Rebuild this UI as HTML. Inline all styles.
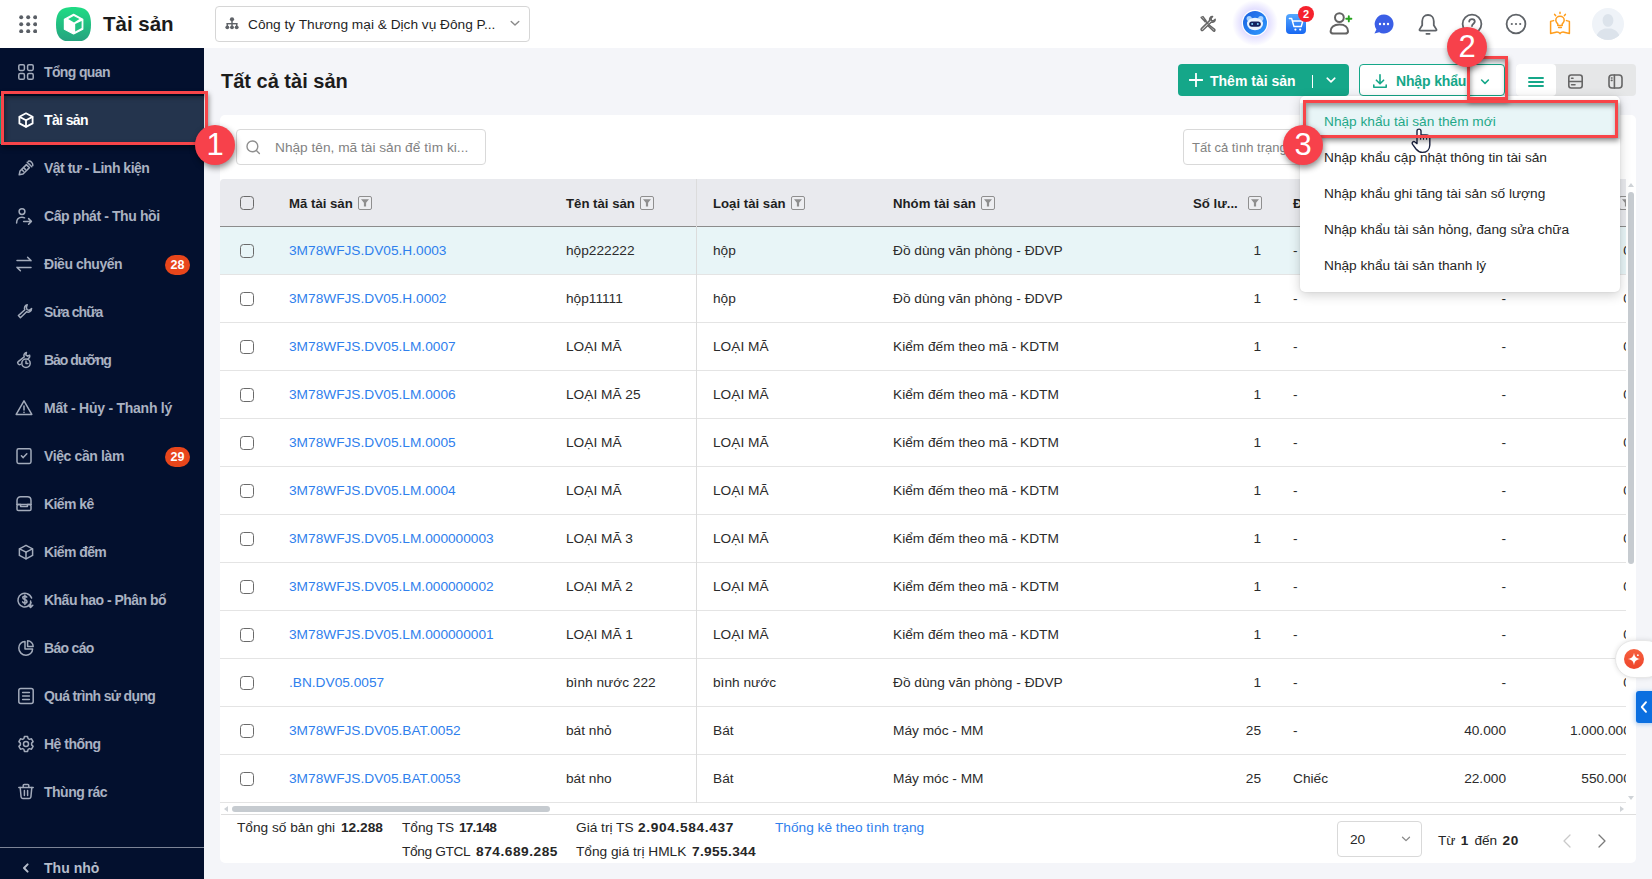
<!DOCTYPE html>
<html lang="vi">
<head>
<meta charset="utf-8">
<title>Tài sản</title>
<style>
*{box-sizing:border-box;margin:0;padding:0}
html,body{width:1652px;height:879px;overflow:hidden;background:#f4f5f9;font-family:"Liberation Sans",sans-serif;color:#212121}
.abs{position:absolute}
#hdr{position:absolute;left:0;top:0;width:1652px;height:48px;background:#fff}
#side{position:absolute;left:0;top:48px;width:204px;height:831px;background:#03102e}
.mi{position:absolute;left:0;width:204px;height:48px;color:#aab2c2;font-weight:bold;font-size:14px;letter-spacing:-0.55px;line-height:48px;padding-left:44px;white-space:nowrap}
.mi svg{position:absolute;left:16px;top:14px;width:20px;height:20px;fill:none;stroke:#a3abbb;stroke-width:1.5;stroke-linecap:round;stroke-linejoin:round}
.mi.act{background:#24344d;color:#fff}
.mi.act svg{stroke:#fff;stroke-width:1.8}
.bdg{position:absolute;left:165px;top:15px;width:25px;height:20px;border-radius:10px;background:#e8461b;color:#fff;font-size:12.5px;font-weight:bold;line-height:20px;text-align:center;letter-spacing:0}
#card{position:absolute;left:220px;top:115px;width:1416px;height:748px;background:#fff;border-radius:5px}
.t{position:absolute;margin-top:1px;white-space:nowrap;font-size:13.7px;line-height:20px;color:#262626}
.lnk{color:#2f80ed !important}
.b{font-weight:bold}
.n{letter-spacing:0.65px}
#tbl{position:absolute;left:220px;top:179px;width:1406px;height:624px;overflow:hidden;background:#fff;border-top-left-radius:4px}
#thead{position:absolute;left:0;top:0;width:1406px;height:48px;background:#e9eaee;border-bottom:1px solid #8c8c8c}
.th{position:absolute;top:14.5px;font-size:13.2px;font-weight:bold;line-height:20px;color:#1f1f1f;white-space:nowrap}
.fi{display:inline-block;width:14px;height:14px;margin-left:5px;vertical-align:-2px}
.tr{position:absolute;left:0;width:1406px;height:48px;border-bottom:1px solid #e4e4e4;background:#fff}
.tr.hl{background:#e8f5f7}
.td{position:absolute;top:14px;font-size:13.7px;line-height:20px;color:#2b2b2b;white-space:nowrap}
.cb{position:absolute;width:13.6px;height:13.6px;border:1.6px solid #6a6a6a;border-radius:3.5px;background:transparent}
#vscroll{position:absolute;left:1626px;top:179px;width:10px;height:624px;background:#fff}
#vscroll .thumb{position:absolute;left:2px;top:13px;width:6px;height:372px;border-radius:3px;background:#c6cbd0}
#vscroll .up{position:absolute;left:2px;top:4px;border:3.5px solid transparent;border-bottom:4px solid #cfd3d7;border-top:0}
#vscroll .dn{position:absolute;left:2px;top:617px;border:3.5px solid transparent;border-top:4px solid #cfd3d7;border-bottom:0}
#hscroll{position:absolute;left:221px;top:803px;width:1406px;height:11px;background:#fff}
#hscroll .thumb{position:absolute;left:11px;top:3px;width:318px;height:6px;border-radius:3px;background:#c6cbd0}
#hscroll .lf{position:absolute;left:3px;top:2.5px;border:3.5px solid transparent;border-right:4px solid #cfd3d7;border-left:0}
#hscroll .rt{position:absolute;right:3px;top:2.5px;border:3.5px solid transparent;border-left:4px solid #cfd3d7;border-right:0}
#dd{position:absolute;left:1300px;top:96px;width:320px;height:196px;background:#fff;border-radius:5px;box-shadow:0 3px 12px rgba(0,0,0,.18),0 0 2px rgba(0,0,0,.1)}
.ddi{position:absolute;left:0;width:320px;height:36px;line-height:38px;padding-left:24px;font-size:13.7px;color:#262626;white-space:nowrap}
.ddi.on{background:#e8f5f7;color:#1ea888}
.redbox{position:absolute;border:3px solid #f84549;box-shadow:1px 3px 5px rgba(0,0,0,.42),inset 1px 3px 5px rgba(0,0,0,.38)}
.num{position:absolute;width:40px;height:40px;border-radius:50%;background:#f7414b;color:#fff;font-size:31px;line-height:40px;text-align:center;box-shadow:1px 3px 6px rgba(0,0,0,.45)}

</style>
</head>
<body>
<div id="hdr">
<svg class="abs" style="left:19px;top:15px" width="18.4" height="18.4" viewBox="0 0 18.4 18.4" fill="#5a5f66"><circle cx="2.2" cy="2.2" r="2" /><circle cx="2.2" cy="9.2" r="2" /><circle cx="2.2" cy="16.2" r="2" /><circle cx="9.2" cy="2.2" r="2" /><circle cx="9.2" cy="9.2" r="2" /><circle cx="9.2" cy="16.2" r="2" /><circle cx="16.2" cy="2.2" r="2" /><circle cx="16.2" cy="9.2" r="2" /><circle cx="16.2" cy="16.2" r="2" /></svg>
<svg class="abs" style="left:56px;top:6.8px" width="35" height="34.4" viewBox="0 0 35 34.4" preserveAspectRatio="none">
<defs><linearGradient id="lg" x1="0" y1="0" x2="0" y2="1"><stop offset="0" stop-color="#1fdc84"/><stop offset="1" stop-color="#25a17f"/></linearGradient></defs>
<path d="M17.5 0 C29 0 35 3.5 35 17.5 C35 31.5 29 35 17.5 35 C6 35 0 31.5 0 17.5 C0 3.5 6 0 17.5 0 Z" fill="url(#lg)"/>
<path d="M17.6 7.4 L26.8 12.2 V22.2 L17.6 27 L8.4 22.2 V12.2 Z" fill="#fff" stroke="#fff" stroke-width="1.2" stroke-linejoin="round"/>
<path d="M12.2 12.1 L17.7 9 L23.5 12.1 L18 15.4 Z" fill="#21cf84"/>
<path d="M19.2 17.1 L25.6 14 V20.9 L19.2 24.5 Z" fill="#22c283"/>
</svg>
<span class="abs" style="left:103px;top:12px;font-size:20.5px;font-weight:bold;line-height:24px;color:#1b1b1b;white-space:nowrap">Tài sản</span>
<div class="abs" style="left:215px;top:6px;width:315px;height:36px;border:1px solid #d6d6d6;border-radius:4px;background:#fff"></div>
<svg class="abs" style="left:225px;top:17px" width="14" height="13" viewBox="0 0 14 13" fill="#5f6368"><circle cx="7" cy="2.3" r="2.1"/><rect x="6.3" y="3" width="1.4" height="6"/><rect x="1.6" y="6" width="10.8" height="1.4"/><rect x="1.6" y="6" width="1.4" height="3.5"/><rect x="11" y="6" width="1.4" height="3.5"/><circle cx="2.3" cy="10.3" r="1.9"/><circle cx="7" cy="10.3" r="1.9"/><circle cx="11.7" cy="10.3" r="1.9"/></svg>
<span class="t" style="left:248px;top:14px;color:#1f1f1f">Công ty Thương mại &amp; Dịch vụ Đông P...</span>
<svg class="abs" style="left:509px;top:17px" width="12" height="12" viewBox="0 0 12 12"><path d="M2.2 4.4 L6 8 L9.8 4.4" fill="none" stroke="#8a8a8a" stroke-width="1.4" stroke-linecap="round" stroke-linejoin="round"/></svg>
<svg class="abs" style="left:1198px;top:14px" width="20" height="20" viewBox="0 0 20 20" fill="none" stroke="#666" stroke-width="1.5" stroke-linecap="round" stroke-linejoin="round">
<path d="M3.2 3.4 L5 2.6 L8 6.6 L7 7.6 Z"/><path d="M7.4 7 L10 9.8"/><path d="M11.2 11 L16.6 15.4 C17.6 16.4 16.2 17.8 15.2 16.8 L10.2 12 Z"/>
<path d="M14.6 2.6 C12.6 2.4 11 4.4 11.8 6.4 L3.4 14.6 C2.4 15.6 3.8 17.2 4.9 16.2 L13.4 8 C15.4 8.8 17.4 7.2 17.2 5.2 L15.4 6.8 L13.4 6.4 L13 4.4 Z"/></svg>
<svg class="abs" style="left:1231px;top:-1px" width="48" height="48" viewBox="0 0 48 48">
<defs><radialGradient id="glow" cx="0.5" cy="0.5" r="0.5"><stop offset="0.5" stop-color="#8a7bff" stop-opacity="0.3"/><stop offset="1" stop-color="#8a7bff" stop-opacity="0"/></radialGradient>
<linearGradient id="botg" x1="0" y1="0" x2="1" y2="1"><stop offset="0" stop-color="#1b5fe0"/><stop offset="1" stop-color="#2f9bff"/></linearGradient></defs>
<circle cx="24" cy="24" r="23" fill="url(#glow)"/><circle cx="24" cy="24" r="13.2" fill="#fff"/><circle cx="24" cy="24" r="12" fill="url(#botg)"/>
<circle cx="18.2" cy="19.6" r="2.6" fill="#a9d4ff"/><circle cx="29.8" cy="19.6" r="2.6" fill="#a9d4ff"/>
<ellipse cx="24" cy="25" rx="8" ry="6.2" fill="#e9f4ff"/><rect x="18.2" y="22.4" width="11.6" height="5.4" rx="2.7" fill="#12205e"/>
<circle cx="21.2" cy="25" r="1" fill="#7fd4ff"/><circle cx="26.8" cy="25" r="1" fill="#7fd4ff"/></svg>
<svg class="abs" style="left:1286px;top:5px" width="30" height="30" viewBox="0 0 30 30">
<defs><linearGradient id="cg" x1="0" y1="0" x2="0" y2="1"><stop offset="0" stop-color="#55a8ff"/><stop offset="1" stop-color="#1767f2"/></linearGradient></defs>
<rect x="0" y="9" width="20" height="20" rx="4" fill="url(#cg)"/>
<path d="M3.4 13.4 H5.6 L8 21.6 H15.2 L16.8 16 H7" fill="none" stroke="#fff" stroke-width="1.5" stroke-linecap="round" stroke-linejoin="round"/><circle cx="9.4" cy="24.6" r="1.1" fill="#fff"/><circle cx="14.2" cy="24.6" r="1.1" fill="#fff"/>
<circle cx="20" cy="9" r="8" fill="#f5222d"/><text x="20" y="13" font-size="11" font-weight="bold" fill="#fff" text-anchor="middle" font-family="Liberation Sans, sans-serif">2</text></svg>
<svg class="abs" style="left:1327px;top:11px" width="28" height="26" viewBox="0 0 28 26" fill="none" stroke="#636363" stroke-width="2" stroke-linecap="round">
<circle cx="12.4" cy="6.6" r="4.4"/><path d="M3.6 20.2 C3.6 16.6 6.6 13.4 12.4 13.4 C18.2 13.4 21 16.6 21 20.2 C21 22 19.6 22.6 18 22.6 H6.6 C5 22.6 3.6 22 3.6 20.2 Z"/>
<path d="M21.8 5.2 V10.4 M19.2 7.8 H24.4" stroke="#27a31f" stroke-width="1.9"/></svg>
<svg class="abs" style="left:1372px;top:13px" width="24" height="24" viewBox="0 0 24 24"><path d="M12 1.5 A9.5 9.5 0 1 1 7.2 19.2 L2.4 20.6 L4.4 16.4 A9.5 9.5 0 0 1 12 1.5 Z" fill="#3b5fe6"/><circle cx="8" cy="11" r="1.2" fill="#fff"/><circle cx="12" cy="11" r="1.2" fill="#fff"/><circle cx="16" cy="11" r="1.2" fill="#fff"/></svg>
<svg class="abs" style="left:1416px;top:12px" width="24" height="24" viewBox="0 0 24 24" fill="none" stroke="#5f6368" stroke-width="1.8" stroke-linecap="round" stroke-linejoin="round"><path d="M12 3 C8.4 3 6.2 5.8 6.2 9.2 V13.2 L3.6 17.4 C3.3 18 3.6 18.6 4.4 18.6 H19.6 C20.4 18.6 20.7 18 20.4 17.4 L17.8 13.2 V9.2 C17.8 5.8 15.6 3 12 3 Z"/><path d="M10.4 21.8 H13.6"/></svg>
<svg class="abs" style="left:1460px;top:12px" width="24" height="24" viewBox="0 0 24 24" fill="none" stroke="#5f6368" stroke-width="1.8" stroke-linecap="round"><circle cx="12" cy="12" r="9.4"/><path d="M9.2 9.6 C9.2 6.2 14.8 6.2 14.8 9.6 C14.8 11.6 12 11.8 12 14"/><path d="M12 17 V17.2"/></svg>
<svg class="abs" style="left:1504px;top:12px" width="24" height="24" viewBox="0 0 24 24" fill="none" stroke="#5f6368" stroke-width="1.8"><circle cx="12" cy="12" r="9.4"/><g fill="#5f6368" stroke="none"><circle cx="7.8" cy="12" r="1.1"/><circle cx="12" cy="12" r="1.1"/><circle cx="16.2" cy="12" r="1.1"/></g></svg>
<svg class="abs" style="left:1548px;top:11px" width="24" height="24" viewBox="0 0 24 24" fill="none" stroke="#ff9d1c" stroke-width="1.5" stroke-linecap="round" stroke-linejoin="round">
<path d="M12 1.2 V2.6 M6.6 3.4 L7.6 4.6 M17.4 3.4 L16.4 4.6"/><path d="M12 5.2 C9.4 5.2 7.8 7.2 7.8 9.2 C7.8 11 9 12 9.8 13 V14.6 H14.2 V13 C15 12 16.2 11 16.2 9.2 C16.2 7.2 14.6 5.2 12 5.2 Z"/><path d="M10.6 16.4 H13.4"/>
<path d="M5.6 9.6 L2.6 10.4 V22.4 L8 21.2 C9.6 20.9 11 21.4 12 22.6 C13 21.4 14.4 20.9 16 21.2 L21.4 22.4 V10.4 L18.4 9.6"/></svg>
<svg class="abs" style="left:1592px;top:8px" width="32" height="32" viewBox="0 0 32 32"><defs><clipPath id="avc"><circle cx="16" cy="16" r="16"/></clipPath></defs><circle cx="16" cy="16" r="16" fill="#eff3f8"/><g clip-path="url(#avc)" fill="#dce3eb"><ellipse cx="16" cy="12.4" rx="5.4" ry="6.4"/><path d="M4 32 C4 24 9 22 13 20.6 H19 C23 22 28 24 28 32 Z"/></g></svg>
</div>
<div id="side">
<div class="mi" style="top:0px;letter-spacing:-0.63px"><svg viewBox="0 0 20 20" style="left:16px"><rect x="2.8" y="2.8" width="5.6" height="5.6" rx="1.3"/><rect x="11.6" y="2.8" width="5.6" height="5.6" rx="1.3"/><rect x="2.8" y="11.6" width="5.6" height="5.6" rx="1.3"/><rect x="11.6" y="11.6" width="5.6" height="5.6" rx="1.3"/></svg>Tổng quan</div>
<div class="mi act" style="top:48px;letter-spacing:-0.62px"><svg viewBox="0 0 20 20" style="left:16px"><path d="M10 3.3 L16.6 6.8 V13.4 L10 16.9 L3.4 13.4 V6.8 Z"/><path d="M3.6 6.9 L10 10.2 L16.4 6.9"/><path d="M10 10.2 V16.7"/></svg>Tài sản</div>
<div class="mi" style="top:96px;letter-spacing:-0.50px"><svg viewBox="0 0 20 20" style="left:15.5px"><path d="M11.2 4.2 L15.8 8.8"/><path d="M12.4 3.2 C14.6 2.6 17.2 5.2 16.8 7.6"/><path d="M10.4 6.6 L13.4 9.6 L7 16 L3.2 16.8 L4 13 Z"/><path d="M7.6 9.6 L9.4 11.4 M5.8 11.6 L7.4 13.2"/></svg>Vật tư - Linh kiện</div>
<div class="mi" style="top:144px;letter-spacing:-0.40px"><svg viewBox="0 0 20 20" style="left:14.4px"><circle cx="8" cy="5.6" r="2.9"/><path d="M2.6 17 C2.6 12.8 5 11.2 8 11.2 C9 11.2 9.8 11.4 10.6 11.8"/><path d="M9.6 15.4 H17.2 M14.6 12.6 L17.4 15.4 L14.6 18.2"/></svg>Cấp phát - Thu hồi</div>
<div class="mi" style="top:192px;letter-spacing:-0.46px"><svg viewBox="0 0 20 20" style="left:14px"><path d="M3 6.6 H17 M13.6 3.2 L17 6.6"/><path d="M17 13.4 H3 M6.4 16.8 L3 13.4"/></svg>Điều chuyển<span class="bdg">28</span></div>
<div class="mi" style="top:240px;letter-spacing:-0.88px"><svg viewBox="0 0 20 20" style="left:14.6px"><path d="M12.2 2.8 C10 3.2 8.8 5.6 9.8 7.8 L3.4 13.6 L5.4 15.8 L11.6 9.8 C13.8 10.8 16.6 9.4 16.6 6.6 L14.2 8.4 L12 7.6 L11.4 5.4 Z"/></svg>Sửa chữa</div>
<div class="mi" style="top:288px;letter-spacing:-1.05px"><svg viewBox="0 0 20 20" style="left:14.6px"><path d="M11.4 2.6 C9.4 3 8.4 5 9.2 6.8 L3.2 11.6 C1.8 13 3.6 15.4 5.4 14.4"/><path d="M11.4 2.6 L10.8 4.8 L12.6 6.2 L14.6 5.2 C15 6.8 14.4 8 13.2 8.6"/><circle cx="11" cy="13.2" r="4.2"/><path d="M11 11 V13.4 H12.8"/></svg>Bảo dưỡng</div>
<div class="mi" style="top:336px;letter-spacing:-0.25px"><svg viewBox="0 0 20 20" style="left:14px"><path d="M10 2.8 L17.8 16.4 H2.2 Z"/><path d="M10 8 V12"/><path d="M10 14.2 V14.4"/></svg>Mất - Hủy - Thanh lý</div>
<div class="mi" style="top:384px;letter-spacing:-0.38px"><svg viewBox="0 0 20 20" style="left:14.4px"><rect x="3" y="2.8" width="14" height="14.6" rx="1.6"/><path d="M7.4 9.8 L9.2 11.6 L12.8 7.8"/></svg>Việc cần làm<span class="bdg">29</span></div>
<div class="mi" style="top:432px;letter-spacing:-0.57px"><svg viewBox="0 0 20 20" style="left:14.4px"><path d="M3 10.6 V6.4 C3 4 4.6 2.8 6.6 2.8 H13.4 C15.4 2.8 17 4 17 6.4 V10.6"/><rect x="3" y="10.6" width="14" height="6" rx="1.4"/><path d="M3 10.6 H6.6 V12.6 H13.4 V10.6 H17"/></svg>Kiểm kê</div>
<div class="mi" style="top:480px;letter-spacing:-0.59px"><svg viewBox="0 0 20 20" style="left:16.4px"><path d="M10 3.3 L16.6 6.8 V13.4 L10 16.9 L3.4 13.4 V6.8 Z"/><path d="M3.6 6.9 L10 10.2 L16.4 6.9"/><path d="M10 10.2 V16.7"/></svg>Kiểm đếm</div>
<div class="mi" style="top:528px;letter-spacing:-0.52px"><svg viewBox="0 0 20 20" style="left:15.1px"><path d="M16 12.6 C14.8 16 11.2 17.6 8 16.8 C4.4 15.8 2.2 12 3.2 8.4 C4.2 4.6 8 2.4 11.6 3.4 C14 4 15.8 5.8 16.6 8"/><path d="M11.8 7.2 C11.4 6.4 10.6 6.2 9.8 6.2 C8.6 6.2 7.8 6.8 7.8 7.8 C7.8 10 12 9 12 11.4 C12 12.4 11.2 13 10 13 C9 13 8 12.6 7.6 11.8 M9.9 5 V14.4"/><path d="M15.6 11 V17.2 M13.4 15.2 L15.6 17.4 L17.8 15.2"/></svg>Khấu hao - Phân bổ</div>
<div class="mi" style="top:576px;letter-spacing:-0.68px"><svg viewBox="0 0 20 20" style="left:15.7px"><path d="M9 3.4 C5.2 3.4 2.8 6.6 2.8 10 C2.8 14 6 17.2 10 17.2 C13.4 17.2 16.6 14.8 16.6 11 H9 Z"/><path d="M11.6 2.8 V8.4 H17.2 C17.2 5.4 14.6 2.8 11.6 2.8 Z"/></svg>Báo cáo</div>
<div class="mi" style="top:624px;letter-spacing:-0.64px"><svg viewBox="0 0 20 20" style="left:16px"><rect x="2.8" y="2.6" width="14.4" height="14.8" rx="2"/><path d="M6.6 6.6 H13.4 M6.6 10 H13.4 M6.6 13.4 H13.4"/></svg>Quá trình sử dụng</div>
<div class="mi" style="top:672px;letter-spacing:-0.51px"><svg viewBox="0 0 20 20" style="left:15.7px"><circle cx="10" cy="10" r="2.5"/><path d="M8.4 2.6 H11.6 L12.1 4.7 L13.4 5.4 L15.5 4.8 L17.1 7.6 L15.6 9.1 V10.9 L17.1 12.4 L15.5 15.2 L13.4 14.6 L12.1 15.3 L11.6 17.4 H8.4 L7.9 15.3 L6.6 14.6 L4.5 15.2 L2.9 12.4 L4.4 10.9 V9.1 L2.9 7.6 L4.5 4.8 L6.6 5.4 L7.9 4.7 Z"/></svg>Hệ thống</div>
<div class="mi" style="top:720px;letter-spacing:-0.51px"><svg viewBox="0 0 20 20" style="left:15.7px"><path d="M2.8 5.4 H17.2"/><path d="M7.2 5.2 V3.6 C7.2 3 7.6 2.6 8.2 2.6 H11.8 C12.4 2.6 12.8 3 12.8 3.6 V5.2"/><path d="M4.2 5.6 L5.1 15 C5.2 15.9 5.8 16.4 6.7 16.4 H13.3 C14.2 16.4 14.8 15.9 14.9 15 L15.8 5.6"/><path d="M8.4 8.4 V13.4 M11.6 8.4 V13.4"/></svg>Thùng rác</div>
<div class="abs" style="left:0;top:799px;width:204px;height:1px;background:#7c8496"></div>
<div class="mi" style="top:796px;color:#b6bdcb;letter-spacing:0.03px"><svg viewBox="0 0 20 20" style="stroke:#b6bdcb;stroke-width:2"><path d="M11.6 6.4 L8 10 L11.6 13.6"/></svg>Thu nhỏ</div>
</div>
<span class="abs" style="left:221px;top:69px;font-size:20px;font-weight:bold;line-height:24px;color:#1c1c1c;white-space:nowrap">Tất cả tài sản</span>
<div class="abs" style="left:1178px;top:64px;width:171px;height:32px;background:#15a789;border-radius:4px"></div>
<svg class="abs" style="left:1189px;top:73px" width="14" height="14" viewBox="0 0 14 14"><path d="M7 0.6 V13.4 M0.6 7 H13.4" stroke="#fff" stroke-width="1.8" stroke-linecap="round"/></svg>
<span class="abs" style="left:1210px;top:71px;font-size:14px;font-weight:bold;line-height:20px;color:#fff;white-space:nowrap">Thêm tài sản</span>
<div class="abs" style="left:1312px;top:75px;width:1px;height:13px;background:#fff"></div>
<svg class="abs" style="left:1325px;top:74px" width="12" height="12" viewBox="0 0 12 12"><path d="M2.2 4.2 L6 7.8 L9.8 4.2" fill="none" stroke="#fff" stroke-width="1.6" stroke-linecap="round" stroke-linejoin="round"/></svg>
<div class="abs" style="left:1359px;top:64px;width:146px;height:32px;background:#fff;border:1px solid #15a789;border-radius:4px"></div>
<svg class="abs" style="left:1372px;top:73px" width="16" height="16" viewBox="0 0 16 16" fill="none" stroke="#15a789" stroke-width="1.6" stroke-linecap="round" stroke-linejoin="round"><path d="M8 1.8 V10.6 M4.4 7.2 L8 10.8 L11.6 7.2"/><path d="M1.8 12 V14.2 H14.2 V12"/></svg>
<span class="abs" style="left:1396px;top:71px;font-size:14px;font-weight:bold;line-height:20px;color:#15a789;white-space:nowrap;letter-spacing:-0.15px">Nhập khẩu</span>
<svg class="abs" style="left:1479px;top:76px" width="12" height="12" viewBox="0 0 12 12"><path d="M2.6 4 L6 7.4 L9.4 4" fill="none" stroke="#15a789" stroke-width="1.6" stroke-linecap="round" stroke-linejoin="round"/></svg>
<div class="abs" style="left:1516px;top:64px;width:120px;height:32px;background:#e6e7e8;border-radius:4px"></div>
<div class="abs" style="left:1516px;top:64px;width:40px;height:32px;background:#fff;border-radius:4px"></div>
<svg class="abs" style="left:1528px;top:76px" width="16" height="12" viewBox="0 0 16 12"><path d="M1 2 H15 M1 6 H15 M1 10 H15" stroke="#15a789" stroke-width="1.9" stroke-linecap="round"/></svg>
<svg class="abs" style="left:1567px;top:73px" width="17" height="17" viewBox="0 0 17 17" fill="none" stroke="#666" stroke-width="1.6" stroke-linecap="round"><rect x="1.8" y="2" width="13.4" height="13" rx="2.4"/><path d="M1.8 8.5 H15.2"/><path d="M4.6 5.2 H6 M4.6 11.8 H8"/></svg>
<svg class="abs" style="left:1607px;top:73px" width="17" height="17" viewBox="0 0 17 17" fill="none" stroke="#666" stroke-width="1.6" stroke-linecap="round"><rect x="2" y="2" width="13" height="13" rx="3"/><path d="M7.4 2 V15"/><path d="M4.4 5 H5 M4.4 7.4 H5"/></svg>
<div id="card"></div>
<div class="abs" style="left:236px;top:129px;width:250px;height:36px;border:1px solid #d9d9d9;border-radius:4px;background:#fff"></div>
<svg class="abs" style="left:245px;top:139px" width="16" height="16" viewBox="0 0 16 16" fill="none" stroke="#8f8f8f" stroke-width="1.4" stroke-linecap="round"><circle cx="7.4" cy="7.4" r="5.4"/><path d="M11.4 11.4 L14.4 14.4"/></svg>
<span class="t" style="left:275px;top:137px;color:#828282">Nhập tên, mã tài sản để tìm ki...</span>
<div class="abs" style="left:1183px;top:129px;width:200px;height:36px;border:1px solid #d9d9d9;border-radius:4px;background:#fff"></div>
<span class="t" style="left:1192px;top:137px;color:#828282;font-size:13px">Tất cả tình trạng</span>
<div id="tbl">
<div id="thead">
<span class="cb" style="left:20px;top:17px"></span>
<span class="th" style="left:69px">Mã tài sản<svg class="fi" viewBox="0 0 14 14"><rect x="0.5" y="0.5" width="13" height="13" rx="1.5" fill="#edeef1" stroke="#8f8f8f"/><path d="M3 3.2 H11 L8.1 6.8 V10.6 H5.9 V6.8 Z" fill="#8f8f8f"/></svg></span>
<span class="th" style="left:346px">Tên tài sản<svg class="fi" viewBox="0 0 14 14"><rect x="0.5" y="0.5" width="13" height="13" rx="1.5" fill="#edeef1" stroke="#8f8f8f"/><path d="M3 3.2 H11 L8.1 6.8 V10.6 H5.9 V6.8 Z" fill="#8f8f8f"/></svg></span>
<span class="th" style="left:493px">Loại tài sản<svg class="fi" viewBox="0 0 14 14"><rect x="0.5" y="0.5" width="13" height="13" rx="1.5" fill="#edeef1" stroke="#8f8f8f"/><path d="M3 3.2 H11 L8.1 6.8 V10.6 H5.9 V6.8 Z" fill="#8f8f8f"/></svg></span>
<span class="th" style="left:673px">Nhóm tài sản<svg class="fi" viewBox="0 0 14 14"><rect x="0.5" y="0.5" width="13" height="13" rx="1.5" fill="#edeef1" stroke="#8f8f8f"/><path d="M3 3.2 H11 L8.1 6.8 V10.6 H5.9 V6.8 Z" fill="#8f8f8f"/></svg></span>
<span class="th" style="left:1073px">ĐVT<svg class="fi" viewBox="0 0 14 14"><rect x="0.5" y="0.5" width="13" height="13" rx="1.5" fill="#edeef1" stroke="#8f8f8f"/><path d="M3 3.2 H11 L8.1 6.8 V10.6 H5.9 V6.8 Z" fill="#8f8f8f"/></svg></span>
<span class="th" style="left:973px">Số lư...<span style="display:inline-block;width:5px"></span><svg class="fi" viewBox="0 0 14 14"><rect x="0.5" y="0.5" width="13" height="13" rx="1.5" fill="#edeef1" stroke="#8f8f8f"/><path d="M3 3.2 H11 L8.1 6.8 V10.6 H5.9 V6.8 Z" fill="#8f8f8f"/></svg></span>
<span class="th" style="left:1201px">Nguyên giá<svg class="fi" viewBox="0 0 14 14"><rect x="0.5" y="0.5" width="13" height="13" rx="1.5" fill="#edeef1" stroke="#8f8f8f"/><path d="M3 3.2 H11 L8.1 6.8 V10.6 H5.9 V6.8 Z" fill="#8f8f8f"/></svg></span>
<span class="th" style="right:-7px">Giá trị<svg class="fi" viewBox="0 0 14 14"><rect x="0.5" y="0.5" width="13" height="13" rx="1.5" fill="#edeef1" stroke="#8f8f8f"/><path d="M3 3.2 H11 L8.1 6.8 V10.6 H5.9 V6.8 Z" fill="#8f8f8f"/></svg></span>
</div>
<div class="tr hl" style="top:48px"><span class="cb" style="left:20px;top:17px"></span><span class="td lnk" style="left:69px">3M78WFJS.DV05.H.0003</span><span class="td" style="left:346px">hộp222222</span><span class="td" style="left:493px">hộp</span><span class="td" style="left:673px">Đồ dùng văn phòng - ĐDVP</span><span class="td" style="right:365px">1</span><span class="td" style="left:1073px">-</span><span class="td" style="right:120px">-</span><span class="td" style="right:-4.8px">0</span></div>
<div class="tr" style="top:96px"><span class="cb" style="left:20px;top:17px"></span><span class="td lnk" style="left:69px">3M78WFJS.DV05.H.0002</span><span class="td" style="left:346px">hộp11111</span><span class="td" style="left:493px">hộp</span><span class="td" style="left:673px">Đồ dùng văn phòng - ĐDVP</span><span class="td" style="right:365px">1</span><span class="td" style="left:1073px">-</span><span class="td" style="right:120px">-</span><span class="td" style="right:-4.8px">0</span></div>
<div class="tr" style="top:144px"><span class="cb" style="left:20px;top:17px"></span><span class="td lnk" style="left:69px">3M78WFJS.DV05.LM.0007</span><span class="td" style="left:346px">LOẠI MÃ</span><span class="td" style="left:493px">LOẠI MÃ</span><span class="td" style="left:673px">Kiểm đếm theo mã - KDTM</span><span class="td" style="right:365px">1</span><span class="td" style="left:1073px">-</span><span class="td" style="right:120px">-</span><span class="td" style="right:-4.8px">0</span></div>
<div class="tr" style="top:192px"><span class="cb" style="left:20px;top:17px"></span><span class="td lnk" style="left:69px">3M78WFJS.DV05.LM.0006</span><span class="td" style="left:346px">LOẠI MÃ 25</span><span class="td" style="left:493px">LOẠI MÃ</span><span class="td" style="left:673px">Kiểm đếm theo mã - KDTM</span><span class="td" style="right:365px">1</span><span class="td" style="left:1073px">-</span><span class="td" style="right:120px">-</span><span class="td" style="right:-4.8px">0</span></div>
<div class="tr" style="top:240px"><span class="cb" style="left:20px;top:17px"></span><span class="td lnk" style="left:69px">3M78WFJS.DV05.LM.0005</span><span class="td" style="left:346px">LOẠI MÃ</span><span class="td" style="left:493px">LOẠI MÃ</span><span class="td" style="left:673px">Kiểm đếm theo mã - KDTM</span><span class="td" style="right:365px">1</span><span class="td" style="left:1073px">-</span><span class="td" style="right:120px">-</span><span class="td" style="right:-4.8px">0</span></div>
<div class="tr" style="top:288px"><span class="cb" style="left:20px;top:17px"></span><span class="td lnk" style="left:69px">3M78WFJS.DV05.LM.0004</span><span class="td" style="left:346px">LOẠI MÃ</span><span class="td" style="left:493px">LOẠI MÃ</span><span class="td" style="left:673px">Kiểm đếm theo mã - KDTM</span><span class="td" style="right:365px">1</span><span class="td" style="left:1073px">-</span><span class="td" style="right:120px">-</span><span class="td" style="right:-4.8px">0</span></div>
<div class="tr" style="top:336px"><span class="cb" style="left:20px;top:17px"></span><span class="td lnk" style="left:69px">3M78WFJS.DV05.LM.000000003</span><span class="td" style="left:346px">LOẠI MÃ 3</span><span class="td" style="left:493px">LOẠI MÃ</span><span class="td" style="left:673px">Kiểm đếm theo mã - KDTM</span><span class="td" style="right:365px">1</span><span class="td" style="left:1073px">-</span><span class="td" style="right:120px">-</span><span class="td" style="right:-4.8px">0</span></div>
<div class="tr" style="top:384px"><span class="cb" style="left:20px;top:17px"></span><span class="td lnk" style="left:69px">3M78WFJS.DV05.LM.000000002</span><span class="td" style="left:346px">LOẠI MÃ 2</span><span class="td" style="left:493px">LOẠI MÃ</span><span class="td" style="left:673px">Kiểm đếm theo mã - KDTM</span><span class="td" style="right:365px">1</span><span class="td" style="left:1073px">-</span><span class="td" style="right:120px">-</span><span class="td" style="right:-4.8px">0</span></div>
<div class="tr" style="top:432px"><span class="cb" style="left:20px;top:17px"></span><span class="td lnk" style="left:69px">3M78WFJS.DV05.LM.000000001</span><span class="td" style="left:346px">LOẠI MÃ 1</span><span class="td" style="left:493px">LOẠI MÃ</span><span class="td" style="left:673px">Kiểm đếm theo mã - KDTM</span><span class="td" style="right:365px">1</span><span class="td" style="left:1073px">-</span><span class="td" style="right:120px">-</span><span class="td" style="right:-4.8px">0</span></div>
<div class="tr" style="top:480px"><span class="cb" style="left:20px;top:17px"></span><span class="td lnk" style="left:69px">.BN.DV05.0057</span><span class="td" style="left:346px">bình nước 222</span><span class="td" style="left:493px">bình nước</span><span class="td" style="left:673px">Đồ dùng văn phòng - ĐDVP</span><span class="td" style="right:365px">1</span><span class="td" style="left:1073px">-</span><span class="td" style="right:120px">-</span><span class="td" style="right:-4.8px">0</span></div>
<div class="tr" style="top:528px"><span class="cb" style="left:20px;top:17px"></span><span class="td lnk" style="left:69px">3M78WFJS.DV05.BAT.0052</span><span class="td" style="left:346px">bát nhỏ</span><span class="td" style="left:493px">Bát</span><span class="td" style="left:673px">Máy móc - MM</span><span class="td" style="right:365px">25</span><span class="td" style="left:1073px">-</span><span class="td" style="right:120px">40.000</span><span class="td" style="right:-4.8px">1.000.000</span></div>
<div class="tr" style="top:576px"><span class="cb" style="left:20px;top:17px"></span><span class="td lnk" style="left:69px">3M78WFJS.DV05.BAT.0053</span><span class="td" style="left:346px">bát nho</span><span class="td" style="left:493px">Bát</span><span class="td" style="left:673px">Máy móc - MM</span><span class="td" style="right:365px">25</span><span class="td" style="left:1073px">Chiếc</span><span class="td" style="right:120px">22.000</span><span class="td" style="right:-4.8px">550.000</span></div>
<div class="abs" style="left:476px;top:0;width:1px;height:624px;background:#dcdcdc"></div>
</div>
<div id="vscroll"><div class="thumb"></div><div class="up"></div><div class="dn"></div></div>
<div id="hscroll"><div class="thumb"></div><div class="lf"></div><div class="rt"></div></div>
<div class="abs" style="left:221px;top:814px;width:1415px;height:1px;background:#dedede"></div>
<span class="t " style="left:237px;top:817px">Tổng số bản ghi</span>
<span class="t b" style="left:341px;top:817px;letter-spacing:0px">12.288</span>
<span class="t " style="left:402px;top:817px">Tổng TS</span>
<span class="t b" style="left:459px;top:817px;letter-spacing:-0.8px">17.148</span>
<span class="t " style="left:576px;top:817px">Giá trị TS</span>
<span class="t b" style="left:638px;top:817px;letter-spacing:0.65px">2.904.584.437</span>
<span class="t lnk" style="left:775px;top:817px">Thống kê theo tình trạng</span>
<span class="t " style="left:402px;top:841px;letter-spacing:-0.35px">Tổng GTCL</span>
<span class="t b" style="left:476px;top:841px;letter-spacing:0.53px">874.689.285</span>
<span class="t " style="left:576px;top:841px">Tổng giá trị HMLK</span>
<span class="t b" style="left:692px;top:841px;letter-spacing:0.35px">7.955.344</span>
<div class="abs" style="left:1337px;top:821px;width:85px;height:36px;border:1px solid #d9d9d9;border-radius:4px;background:#fff"></div>
<span class="t " style="left:1350px;top:829px">20</span>
<svg class="abs" style="left:1400px;top:833px" width="12" height="12" viewBox="0 0 12 12"><path d="M2.5 4.2 L6 7.6 L9.5 4.2" fill="none" stroke="#8a8a8a" stroke-width="1.3" stroke-linecap="round" stroke-linejoin="round"/></svg>
<span class="t" style="left:1438px;top:830px;font-size:13.6px;word-spacing:1.6px">Từ <b class="n">1</b> đến <b class="n">20</b></span>
<svg class="abs" style="left:1560px;top:833px" width="14" height="16" viewBox="0 0 14 16"><path d="M10 2 L4 8 L10 14" fill="none" stroke="#c9c9c9" stroke-width="1.3" stroke-linecap="round" stroke-linejoin="round"/></svg>
<svg class="abs" style="left:1595px;top:833px" width="14" height="16" viewBox="0 0 14 16"><path d="M4 2 L10 8 L4 14" fill="none" stroke="#7a7a7a" stroke-width="1.3" stroke-linecap="round" stroke-linejoin="round"/></svg>
<div id="dd">
<div class="ddi on" style="top:7px">Nhập khẩu tài sản thêm mới</div>
<div class="ddi" style="top:43px">Nhập khẩu cập nhật thông tin tài sản</div>
<div class="ddi" style="top:79px">Nhập khẩu ghi tăng tài sản số lượng</div>
<div class="ddi" style="top:115px">Nhập khẩu tài sản hỏng, đang sửa chữa</div>
<div class="ddi" style="top:151px">Nhập khẩu tài sản thanh lý</div>
</div>
<svg class="abs" style="left:1411px;top:128px" width="21" height="26" viewBox="0 0 21 26"><path d="M6 15.6 V3 C6 0.5 10 0.5 10 3 V7 H15 C17.6 7 18.8 8.4 18.8 10.6 V17 C18.8 21.6 15.6 24.4 11.4 24.4 C8.4 24.4 6.6 23 5 21 L1.6 16.4 C0.4 14.6 2.4 12.6 4 14 Z" fill="#fff" stroke="#1b2340" stroke-width="1.4" stroke-linejoin="round"/><path d="M9.6 10 V11.8 M12.5 10 V11.8 M15.6 10 V11.8" stroke="#1b2340" stroke-width="1.1" fill="none"/></svg>
<div class="abs" style="left:0;top:96px;width:3px;height:48px;background:#17a98a"></div>
<div class="redbox" style="left:1px;top:91px;width:207px;height:54px"></div>
<div class="redbox" style="left:1467px;top:56px;width:41px;height:44px"></div>
<div class="redbox" style="left:1303px;top:100px;width:315px;height:38px"></div>
<div class="num" style="left:195px;top:125px">1</div>
<div class="num" style="left:1447px;top:27px">2</div>
<div class="num" style="left:1283px;top:125px">3</div>
<div class="abs" style="left:1615px;top:640px;width:50px;height:38px;border-radius:19px;background:#fff;border:1px solid #e8e8e8;box-shadow:0 0 5px rgba(0,0,0,.12)"></div>
<svg class="abs" style="left:1624px;top:649px" width="20" height="20" viewBox="0 0 20 20"><defs><linearGradient id="aig" x1="0" y1="0" x2="0" y2="1"><stop offset="0" stop-color="#f6603f"/><stop offset="1" stop-color="#ee452b"/></linearGradient></defs><circle cx="10" cy="10" r="10" fill="url(#aig)"/><path d="M10 3.8 C10.8 8 12 9.2 16.2 10 C12 10.8 10.8 12 10 16.2 C9.2 12 8 10.8 3.8 10 C8 9.2 9.2 8 10 3.8 Z" fill="#fff"/><circle cx="13.9" cy="6.2" r="0.9" fill="#fff"/></svg>
<div class="abs" style="left:1636px;top:691px;width:20px;height:32px;border-radius:3px;background:#0b6fe0;box-shadow:-1px 1px 5px rgba(11,111,224,.35)"></div>
<svg class="abs" style="left:1639px;top:700px" width="10" height="14" viewBox="0 0 10 14"><path d="M7 2.2 L2.8 7 L7 11.8" fill="none" stroke="#fff" stroke-width="1.9" stroke-linecap="round" stroke-linejoin="round"/></svg>
</body>
</html>
